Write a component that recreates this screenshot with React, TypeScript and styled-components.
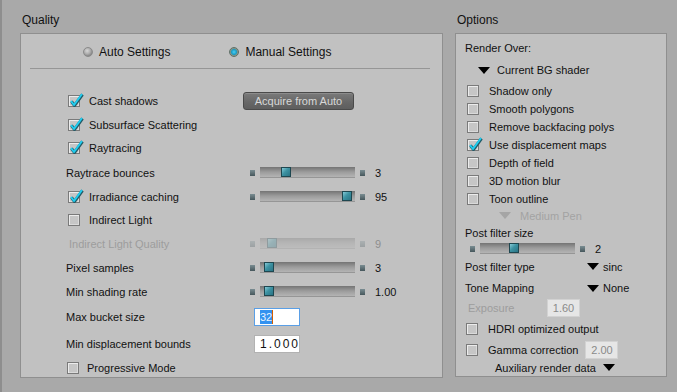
import React from "react";
import styled, { createGlobalStyle } from "styled-components";

const GlobalStyle = createGlobalStyle`
  html, body {
    margin: 0;
    padding: 0;
  }
  body {
    background: #a9a9a9;
    font-family: "Liberation Sans", Arial, sans-serif;
    font-size: 11px;
    color: #111;
  }
`;

const Page = styled.div`
  width: 677px;
  height: 392px;
  box-sizing: border-box;
  border-left: 2px solid #8e8e8e;
  padding-left: 18px;
  display: flex;
  gap: 12px;
`;

const Section = styled.div`
  display: flex;
  flex-direction: column;
`;

const SectionTitle = styled.div`
  height: 33px;
  box-sizing: border-box;
  padding: 7px 0 0 2px;
  display: flex;
  align-items: center;
  font-size: 12px;
`;

const Panel = styled.div<{ $w: number; $h: number }>`
  width: ${(p) => p.$w}px;
  height: ${(p) => p.$h}px;
  box-sizing: border-box;
  background: #c1c1c1;
  border: 1px solid #8f8f8f;
`;

const QualityPanel = styled(Panel)`
  padding-top: 7px;
`;

const OptionsPanel = styled(Panel)`
  padding-top: 4px;
`;

/* radios */

const RadioRow = styled.div`
  height: 22px;
  display: flex;
  align-items: center;
  padding-left: 62px;
  gap: 59px;
  font-size: 12px;
`;

const RadioOption = styled.label`
  display: flex;
  align-items: center;
  gap: 6px;
`;

const RadioDot = styled.span<{ $on?: boolean }>`
  width: 10px;
  height: 10px;
  box-sizing: border-box;
  border-radius: 50%;
  border: 1px solid ${(p) => (p.$on ? "#5f7068" : "#8a8a8a")};
  background: ${(p) =>
    p.$on
      ? "radial-gradient(circle at 50% 50%, #4fd0f0 0, #1a9cc8 2.5px, #7e9488 3.5px, #a9b6ae 5px)"
      : "radial-gradient(circle at 40% 35%, #d6d6d6 0, #b0b0b0 3px, #8c8c8c 5px)"};
`;

const Separator = styled.div`
  height: 1px;
  background: #969696;
  margin: 5px 12px 0 9px;
`;

/* quality rows */

const Rows = styled.div`
  margin-top: 20px;
`;

const Row = styled.div<{ $h: number }>`
  height: ${(p) => p.$h}px;
  display: grid;
  grid-template-columns: 184px auto;
  align-items: center;
  padding-left: 45px;
`;

const Label = styled.span<{ $dim?: boolean; $shift?: number }>`
  color: ${(p) => (p.$dim ? "#9d9d9d" : "#111")};
  padding-left: ${(p) => p.$shift ?? 0}px;
  white-space: nowrap;
`;

const Controls = styled.div`
  display: flex;
  align-items: center;
`;

/* checkbox */

const CheckLabel = styled.label<{ $gap?: number; $shift?: number }>`
  display: flex;
  align-items: center;
  gap: ${(p) => p.$gap ?? 9}px;
  padding-left: ${(p) => p.$shift ?? 2}px;
  white-space: nowrap;
`;

const Box = styled.span`
  position: relative;
  width: 12px;
  height: 12px;
  box-sizing: border-box;
  border: 1px solid #7a7a7a;
  background: #c6c6c6;
  box-shadow: inset 1px 1px 0 #ececec, inset -1px -1px 0 #dadada;
  flex: none;
`;

const Tick = styled.svg`
  position: absolute;
  left: -1px;
  top: -4px;
  overflow: visible;
`;

const Checkbox = ({
  checked,
  children,
  gap,
  shift,
}: {
  checked?: boolean;
  children: React.ReactNode;
  gap?: number;
  shift?: number;
}) => (
  <CheckLabel $gap={gap} $shift={shift}>
    <Box>
      {checked && (
        <Tick width="16" height="16" viewBox="0 0 16 16">
          <polyline
            points="3.5,9.5 6.5,13.5 14.5,2.5"
            fill="none"
            stroke="#235a66"
            strokeWidth="3"
            strokeLinejoin="round"
          />
          <polyline
            points="3,9 6,13 14,2"
            fill="none"
            stroke="#1fcdf0"
            strokeWidth="2"
            strokeLinejoin="round"
          />
        </Tick>
      )}
    </Box>
    <span>{children}</span>
  </CheckLabel>
);

/* button */

const AcquireButton = styled.button`
  margin-left: -7px;
  width: 111px;
  height: 18px;
  box-sizing: border-box;
  border: 1px solid #4a4a4a;
  border-radius: 3px;
  background: linear-gradient(#7a7a7a, #666 60%, #5e5e5e);
  box-shadow: inset 0 1px 0 #8c8c8c;
  color: #d8d8d8;
  font-family: "Liberation Sans", Arial, sans-serif;
  font-size: 11px;
  padding: 0;
`;

/* slider */

const SliderWrap = styled.div<{ $disabled?: boolean }>`
  display: flex;
  align-items: center;
  opacity: ${(p) => (p.$disabled ? 0.3 : 1)};
`;

const EndCap = styled.span`
  width: 5px;
  height: 6px;
  background: linear-gradient(#7a8d92, #46575c);
`;

const Track = styled.div`
  position: relative;
  width: 95px;
  height: 10px;
  margin: 0 5px;
  background: linear-gradient(#747474, #9c9c9c 50%, #b4b4b4);
  border-bottom: 1px solid #969696;
`;

const Thumb = styled.span`
  position: absolute;
  top: 0;
  width: 10px;
  height: 10px;
  box-sizing: border-box;
  border: 1px solid #1e4750;
  background: linear-gradient(135deg, #86cad6, #3c92a2 45%, #2a7384);
`;

const SliderValue = styled.span`
  margin-left: 10px;
`;

const Slider = ({
  pos,
  value,
  disabled,
}: {
  pos: number;
  value: string;
  disabled?: boolean;
}) => (
  <SliderWrap $disabled={disabled}>
    <EndCap />
    <Track>
      <Thumb style={{ left: pos }} />
    </Track>
    <EndCap />
    <SliderValue>{value}</SliderValue>
  </SliderWrap>
);

/* text fields */

const Field = styled.div<{ $focused?: boolean; $wide?: boolean }>`
  margin-left: 4px;
  width: 46px;
  height: 18px;
  box-sizing: border-box;
  background: #fff;
  border: 1px solid ${(p) => (p.$focused ? "#5a9fe6" : "#b2b2b2")};
  padding-left: 5px;
  display: flex;
  align-items: center;
  letter-spacing: ${(p) => (p.$wide ? "2px" : "0")};
  font-size: ${(p) => (p.$wide ? "12px" : "11px")};
`;

const Selected = styled.span`
  background: #3392f0;
  color: #e8f2ff;
  border-right: 1px solid #d35f00;
  line-height: 14px;
`;

const GreyField = styled.div<{ $gapLeft?: number }>`
  margin-left: ${(p) => p.$gapLeft ?? 0}px;
  width: 33px;
  height: 18px;
  box-sizing: border-box;
  background: #e6e6e6;
  border: 1px solid #d2d2d2;
  color: #8a8a8a;
  display: flex;
  align-items: center;
  justify-content: center;
`;

/* options rows */

const OptRow = styled.div<{ $h: number; $indent?: number }>`
  height: ${(p) => p.$h}px;
  display: flex;
  align-items: center;
  padding-left: ${(p) => 9 + (p.$indent ?? 0)}px;
  white-space: nowrap;
`;

const OptGrid = styled(OptRow)<{ $col: number }>`
  display: grid;
  grid-template-columns: ${(p) => p.$col}px auto;
`;

const Dropdown = styled.span<{ $dim?: boolean; $gap?: number }>`
  display: flex;
  align-items: center;
  gap: ${(p) => p.$gap ?? 7}px;
  color: ${(p) => (p.$dim ? "#a3a3a3" : "#111")};
`;

const Arrow = ({ color = "#000" }: { color?: string }) => (
  <svg width="12" height="7" viewBox="0 0 12 7">
    <path d="M0 0H12L6 7Z" fill={color} />
  </svg>
);

export default function App() {
  return (
    <>
      <GlobalStyle />
      <Page>
        <Section>
          <SectionTitle>Quality</SectionTitle>
          <QualityPanel $w={423} $h={345}>
            <RadioRow>
              <RadioOption>
                <RadioDot />
                Auto Settings
              </RadioOption>
              <RadioOption>
                <RadioDot $on />
                Manual Settings
              </RadioOption>
            </RadioRow>
            <Separator />
            <Rows>
              <Row $h={24}>
                <Checkbox checked>Cast shadows</Checkbox>
                <Controls>
                  <AcquireButton>Acquire from Auto</AcquireButton>
                </Controls>
              </Row>
              <Row $h={23}>
                <Checkbox checked>Subsurface Scattering</Checkbox>
              </Row>
              <Row $h={24}>
                <Checkbox checked>Raytracing</Checkbox>
              </Row>
              <Row $h={25}>
                <Label>Raytrace bounces</Label>
                <Slider pos={21} value="3" />
              </Row>
              <Row $h={23}>
                <Checkbox checked>Irradiance caching</Checkbox>
                <Slider pos={82} value="95" />
              </Row>
              <Row $h={24}>
                <Checkbox>Indirect Light</Checkbox>
              </Row>
              <Row $h={23}>
                <Label $dim $shift={3}>
                  Indirect Light Quality
                </Label>
                <Slider pos={7} value="9" disabled />
              </Row>
              <Row $h={25}>
                <Label>Pixel samples</Label>
                <Slider pos={4} value="3" />
              </Row>
              <Row $h={23}>
                <Label>Min shading rate</Label>
                <Slider pos={4} value="1.00" />
              </Row>
              <Row $h={28}>
                <Label>Max bucket size</Label>
                <Controls>
                  <Field $focused>
                    <Selected>32</Selected>
                  </Field>
                </Controls>
              </Row>
              <Row $h={25}>
                <Label>Min displacement bounds</Label>
                <Controls>
                  <Field $wide>1.000</Field>
                </Controls>
              </Row>
              <Row $h={24}>
                <Checkbox shift={1} gap={8}>
                  Progressive Mode
                </Checkbox>
              </Row>
            </Rows>
          </QualityPanel>
        </Section>

        <Section>
          <SectionTitle>Options</SectionTitle>
          <OptionsPanel $w={212} $h={344}>
            <OptRow $h={20}>Render Over:</OptRow>
            <OptRow $h={24} $indent={13}>
              <Dropdown>
                <Arrow />
                Current BG shader
              </Dropdown>
            </OptRow>
            <OptRow $h={18}>
              <Checkbox gap={10}>Shadow only</Checkbox>
            </OptRow>
            <OptRow $h={18}>
              <Checkbox gap={10}>Smooth polygons</Checkbox>
            </OptRow>
            <OptRow $h={18}>
              <Checkbox gap={10}>Remove backfacing polys</Checkbox>
            </OptRow>
            <OptRow $h={18}>
              <Checkbox gap={10} checked>
                Use displacement maps
              </Checkbox>
            </OptRow>
            <OptRow $h={18}>
              <Checkbox gap={10}>Depth of field</Checkbox>
            </OptRow>
            <OptRow $h={18}>
              <Checkbox gap={10}>3D motion blur</Checkbox>
            </OptRow>
            <OptRow $h={18}>
              <Checkbox gap={10}>Toon outline</Checkbox>
            </OptRow>
            <OptRow $h={15} $indent={34}>
              <Dropdown $dim $gap={9}>
                <Arrow color="#a5a5a5" />
                Medium Pen
              </Dropdown>
            </OptRow>
            <OptRow $h={19}>Post filter size</OptRow>
            <OptRow $h={13} $indent={5}>
              <Slider pos={29} value="2" />
            </OptRow>
            <OptGrid $h={23} $col={122}>
              <span>Post filter type</span>
              <Dropdown $gap={4}>
                <Arrow />
                sinc
              </Dropdown>
            </OptGrid>
            <OptGrid $h={20} $col={122}>
              <span>Tone Mapping</span>
              <Dropdown $gap={4}>
                <Arrow />
                None
              </Dropdown>
            </OptGrid>
            <OptGrid $h={20} $col={82}>
              <Label $dim $shift={3}>
                Exposure
              </Label>
              <GreyField>1.60</GreyField>
            </OptGrid>
            <OptRow $h={22}>
              <Checkbox gap={10} shift={1}>
                HDRI optimized output
              </Checkbox>
            </OptRow>
            <OptRow $h={19}>
              <Checkbox gap={10} shift={1}>
                Gamma correction
              </Checkbox>
              <GreyField $gapLeft={7}>2.00</GreyField>
            </OptRow>
            <OptRow $h={17} $indent={30}>
              <Dropdown>
                Auxiliary render data
                <Arrow />
              </Dropdown>
            </OptRow>
          </OptionsPanel>
        </Section>
      </Page>
    </>
  );
}
